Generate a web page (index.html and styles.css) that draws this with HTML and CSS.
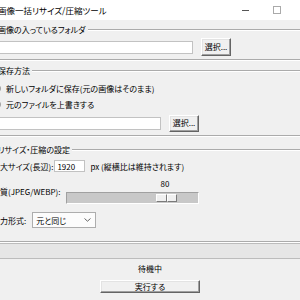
FILE: index.html
```html
<!DOCTYPE html>
<html lang="ja">
<head>
  <meta charset="UTF-8">
  <title>画像一括リサイズ/圧縮ツール</title>
  <link rel="stylesheet" href="styles.css">
</head>
<body>
  <div class="window">
    <div class="titlebar">
      <span class="title">画像一括リサイズ/圧縮ツール</span>
      <span class="caption-btn"><span class="min-icon"></span></span>
      <span class="caption-btn"><span class="max-icon"></span></span>
      <span class="caption-btn"></span>
    </div>

    <div class="client">
      <fieldset class="group group-src">
        <legend>画像の入っているフォルダ</legend>
        <div class="group-body">
          <div class="row row-path">
            <input class="entry entry-src" type="text">
            <button class="btn btn-pick">選択...</button>
          </div>
        </div>
      </fieldset>

      <fieldset class="group group-save">
        <legend>保存方法</legend>
        <div class="group-body">
          <label class="radio"><span class="radio-dot checked"></span>新しいフォルダに保存(元の画像はそのまま)</label>
          <label class="radio"><span class="radio-dot"></span>元のファイルを上書きする</label>
          <div class="row row-path row-out">
            <input class="entry entry-out" type="text">
            <button class="btn btn-pick">選択...</button>
          </div>
        </div>
      </fieldset>

      <fieldset class="group group-opts">
        <legend>リサイズ・圧縮の設定</legend>
        <div class="group-body">
          <div class="row row-size">
            <span class="field-label">最大サイズ(長辺):</span>
            <input class="entry entry-size" type="text" value="1920">
            <span class="hint">px (縦横比は維持されます)</span>
          </div>
          <div class="row row-quality">
            <span class="field-label">品質(JPEG/WEBP):</span>
            <div class="scale">
              <div class="scale-value" style="margin-left: 88px">80</div>
              <div class="trough">
                <div class="slider" style="margin-left: 88px"><span></span><span></span></div>
              </div>
            </div>
          </div>
          <div class="row row-format">
            <span class="field-label">出力形式:</span>
            <div class="combo">
              <span class="combo-text">元と同じ</span>
              <svg class="combo-arrow" width="7" height="4" viewBox="0 0 7 4"><path d="M0.5 0.5 L3.5 3.2 L6.5 0.5" fill="none" stroke="#555" stroke-width="0.9"/></svg>
            </div>
          </div>
        </div>
      </fieldset>

      <div class="progress"></div>
      <div class="status">待機中</div>
      <div class="run-wrap">
        <button class="btn btn-run">実行する</button>
      </div>
    </div>
  </div>
</body>
</html>
```

FILE: styles.css
```css
html, body {
  margin: 0;
  padding: 0;
  overflow: hidden;
  background: #f0f0f0;
}

body {
  font-family: "Noto Sans CJK JP", "Noto Sans", sans-serif;
  font-size: 8px;
  font-feature-settings: "palt";
  color: #000;
}

.window {
  width: 350px;
  margin-left: -25px;
}

/* title bar */
.titlebar {
  height: 20px;
  background: #fff;
  display: flex;
  align-items: center;
}

.title {
  flex: 1;
  margin-left: 23px;
  font-size: 8.5px;
  line-height: 20px;
  white-space: nowrap;
}

.caption-btn {
  width: 32px;
  height: 20px;
  display: flex;
  align-items: center;
  justify-content: center;
}

.min-icon {
  width: 7px;
  height: 1px;
  background: #555;
}

.max-icon {
  width: 6px;
  height: 6px;
  border: 1px solid #aaa;
}

/* client area */
.client {
  padding: 0 10px;
}

.group {
  margin: 0;
  padding: 0;
  min-width: 0;
  border: 2px groove #fff;
}

.group legend {
  margin-left: 9px;
  padding: 0 2px;
  line-height: 10px;
}

.group-body {
  padding: 3px 4px 3px 4px;
}

.group-src {
  margin-top: 5px;
}

.group-save {
  margin-top: 5px;
}

.group-save .group-body {
  padding-top: 4px;
}

.group-opts {
  margin-top: 8px;
}

.group-opts .group-body {
  padding: 2px 4px 12px 4px;
}

.row {
  display: flex;
  align-items: center;
}

.row-path {
  height: 18px;
}

.row-out {
  margin-top: 2px;
}

.entry {
  box-sizing: border-box;
  margin: 0;
  padding: 0 2px;
  height: 13px;
  border: 1px solid #c2c2c2;
  background: #fff;
  font: inherit;
  color: #000;
  outline: none;
}

.entry-src {
  width: 202px;
}

.entry-out {
  width: 170px;
}

.btn {
  box-sizing: border-box;
  margin: 0;
  padding: 0;
  background: #f0f0f0;
  border: 1px solid;
  border-color: #fff #646464 #646464 #fff;
  box-shadow: inset -1px -1px 0 #a0a0a0, inset 1px 1px 0 #e3e3e3;
  font: inherit;
  color: #000;
  line-height: 1;
}

.btn-pick {
  width: 30px;
  height: 18px;
  margin-left: 8px;
}

.row-out .btn-pick {
  height: 17px;
}

/* radio buttons */
.radio {
  display: flex;
  align-items: center;
  height: 16px;
  white-space: nowrap;
}

.radio-dot {
  box-sizing: border-box;
  width: 9px;
  height: 9px;
  margin-left: 1px;
  margin-right: 5px;
  border: 1px solid #8a8a8a;
  border-radius: 50%;
  background: #fff;
}

.radio-dot.checked {
  background: radial-gradient(circle, #222 0 2px, #fff 2.5px);
}

/* settings rows */
.field-label {
  margin-left: 1px;
  white-space: nowrap;
}

.row-size {
  height: 18px;
}

.entry-size {
  width: 31px;
  height: 12px;
  margin-left: 1px;
}

.hint {
  margin-left: 5px;
  white-space: nowrap;
}

.row-quality {
  margin-top: 4px;
  padding-bottom: 2px;
}

.scale {
  margin-left: 6px;
  display: flex;
  flex-direction: column;
}

.scale-value {
  width: 21px;
  height: 11px;
  text-align: center;
  line-height: 10px;
}

.trough {
  box-sizing: border-box;
  width: 133px;
  height: 12px;
  margin-top: 2px;
  padding: 1px;
  background: #c8c8c8;
  border: 1px solid;
  border-color: #a0a0a0 #fff #fff #a0a0a0;
  display: flex;
}

.slider {
  width: 21px;
  display: flex;
}

.slider span {
  flex: 1;
  background: #f0f0f0;
  border: 1px solid;
  border-color: #fff #7a7a7a #7a7a7a #fff;
}

.row-format {
  height: 18px;
  margin-top: 5px;
}

.combo {
  box-sizing: border-box;
  width: 64px;
  height: 16px;
  margin-left: 6px;
  padding: 0 4px 0 3px;
  border: 1px solid #adadad;
  background: #fcfcfc;
  display: flex;
  align-items: center;
  justify-content: space-between;
}

/* bottom */
.progress {
  height: 14px;
  border: 1px solid #bcbcbc;
  background: #e6e6e6;
}

.status {
  margin-top: 5px;
  line-height: 10px;
  text-align: center;
}

.run-wrap {
  display: flex;
  justify-content: center;
  margin-top: 6px;
}

.btn-run {
  width: 100px;
  height: 13px;
}
```
